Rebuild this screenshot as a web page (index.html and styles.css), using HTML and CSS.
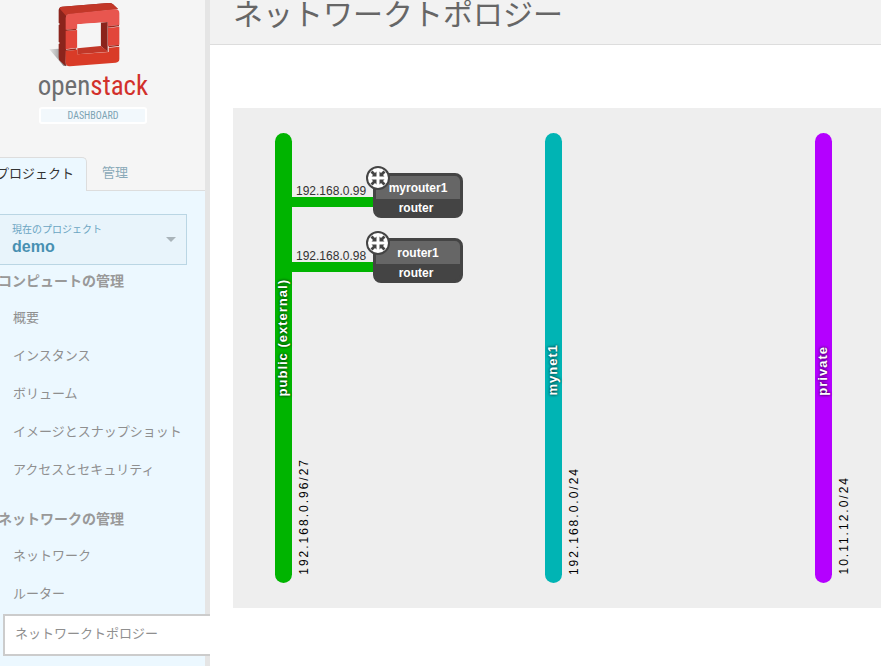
FILE: index.html
```html
<!DOCTYPE html>
<html lang="ja">
<head>
<meta charset="utf-8">
<title>ネットワークトポロジー</title>
<link rel="stylesheet" href="styles.css">
</head>
<body>
<div class="page">
  <aside class="sidebar">
    <a class="brand" href="#">
      <svg class="brand-mark" viewBox="144 6 216 198" aria-hidden="true">
        <defs>
          <linearGradient id="shade" x1="0" x2="1">
            <stop offset="0" stop-color="#999" stop-opacity=".2"/>
            <stop offset="1" stop-color="#666"/>
          </linearGradient>
        </defs>
        <path d="M148 148L178 146L200 198L190 197Z" fill="url(#shade)"/>
        <path d="M176 30Q177 21 186 20L325 9Q333 8 339 13L354 27L200 44L197 199L181 184Q176 181 176 172V132L180 129L176 126V75L180 72L176 69Z" fill="#8b241c"/>
        <path d="M178 25Q180 21 187 20L325 9Q333 8 339 13L354 27L207 42Q202 43 198 47Z" fill="#c23728"/>
        <path d="M197 55Q197 43 210 41L344 28Q358 27 358 40V75L323 79V66L232 73V86L197 89Z" fill="#e8564f"/>
        <path d="M197 93L232 90V143L197 148Z" fill="#e2463a"/>
        <path d="M324 84L358 80V134L324 138Z" fill="#e2463a"/>
        <path d="M302 68L323 66V155L302 138Z" fill="#8b241c"/>
        <path d="M232 73L302 68V138L232 143Z" fill="#f5f5f5"/>
        <path d="M232 145L302 138L325 155L232 163Z" fill="#c23728"/>
        <path d="M197 153L232 149V163L326 156V143L358 140V177Q358 187 347 188L210 199Q197 200 197 187Z" fill="#d93b27"/>
        <path d="M197 91L229 88M324 81L357 77M197 151L229 147M326 140L357 136" stroke="#9d2a20" stroke-width="4"/>
      </svg>
      <span class="brand-name">open<b>stack</b></span>
      <span class="brand-sub">DASHBOARD</span>
    </a>
    <nav class="tabs">
      <a class="tab tab-active" href="#">プロジェクト</a>
      <a class="tab" href="#">管理</a>
    </nav>
    <div class="panel">
      <button class="switcher" type="button">
        <span class="switcher-text">
          <span class="switcher-label">現在のプロジェクト</span>
          <span class="switcher-value">demo</span>
        </span>
        <span class="caret"></span>
      </button>
      <h2 class="group">コンピュートの管理</h2>
      <ul class="menu">
        <li><a href="#">概要</a></li>
        <li><a href="#">インスタンス</a></li>
        <li><a href="#">ボリューム</a></li>
        <li><a href="#">イメージとスナップショット</a></li>
        <li><a href="#">アクセスとセキュリティ</a></li>
      </ul>
      <h2 class="group">ネットワークの管理</h2>
      <ul class="menu">
        <li><a href="#">ネットワーク</a></li>
        <li><a href="#">ルーター</a></li>
        <li><a class="current" href="#">ネットワークトポロジー</a></li>
      </ul>
    </div>
  </aside>
  <main class="main">
    <header class="header"><h1>ネットワークトポロジー</h1></header>
    <section class="topology">
      <div class="network">
        <div class="bar bar-green"><span class="net-name">public (external)</span></div>
        <div class="side">
          <div class="devices">
            <div class="device">
              <div class="port"><span>192.168.0.99</span></div>
              <a class="router" href="#">
                <svg class="router-icon" viewBox="0 0 24 24" aria-hidden="true">
                  <circle cx="12" cy="12" r="11" fill="#fff" stroke="#444" stroke-width="2"/>
                  <g id="arrows" fill="#444">
                    <path id="arrow" d="M4.500 6.500L6.500 4.500L9 7L10.500 5.500V10.500H5.500L7 9Z"/>
                    <use href="#arrow" transform="rotate(90 12 12)"/>
                    <use href="#arrow" transform="rotate(180 12 12)"/>
                    <use href="#arrow" transform="rotate(270 12 12)"/>
                  </g>
                </svg>
                <span class="router-name">myrouter1</span>
                <span class="router-type">router</span>
              </a>
            </div>
            <div class="device">
              <div class="port"><span>192.168.0.98</span></div>
              <a class="router" href="#">
                <svg class="router-icon" viewBox="0 0 24 24" aria-hidden="true">
                  <circle cx="12" cy="12" r="11" fill="#fff" stroke="#444" stroke-width="2"/>
                  <use href="#arrows"/>
                </svg>
                <span class="router-name">router1</span>
                <span class="router-type">router</span>
              </a>
            </div>
          </div>
          <span class="cidr">192.168.0.96/27</span>
        </div>
      </div>
      <div class="network">
        <div class="bar bar-teal"><span class="net-name">mynet1</span></div>
        <div class="side"><span class="cidr">192.168.0.0/24</span></div>
      </div>
      <div class="network">
        <div class="bar bar-purple"><span class="net-name">private</span></div>
        <div class="side"><span class="cidr">10.11.12.0/24</span></div>
      </div>
    </section>
  </main>
</div>
</body>
</html>
```
FILE: styles.css
```css
* { box-sizing: border-box; }
html, body { height: 100%; }
body {
  margin: 0;
  overflow: hidden;
  background: #fff;
  color: #666;
  font: 13px/20px "Liberation Sans", "Noto Sans CJK JP", sans-serif;
}
a { color: inherit; text-decoration: none; }
h1, h2, ul { margin: 0; padding: 0; }
ul { list-style: none; }

.page { display: flex; min-height: 100%; }

/* The sidebar starts a little beyond the left edge of the window. */
.sidebar {
  flex: none;
  display: flex;
  flex-direction: column;
  width: 230px;
  margin-left: -20px;
  border-right: 5px solid #e5e5e5;
  background: #f5f5f5;
}
.brand {
  display: flex;
  flex-direction: column;
  align-items: center;
  width: 108px;
  margin-left: 59px;
  padding-top: 2px;
}
.brand-mark { width: 72px; height: 66px; margin-right: 18px; }
.brand-name {
  font: 27px/36px "Roboto Condensed", "Open Sans Condensed", "Liberation Sans Narrow", sans-serif;
  color: #6d6e70;
}
.brand-name b { color: #d2302b; font-weight: inherit; }
.brand-sub {
  width: 108px;
  margin-top: 3px;
  border: 2px solid #fff;
  border-radius: 3px;
  background: #f2f8fc;
  color: #7da3b3;
  font: 10px/13px "Roboto Condensed", "Open Sans Condensed", "Liberation Sans Narrow", sans-serif;
  text-align: center;
}

.tabs {
  display: flex;
  margin-top: 33px;
  border-bottom: 1px solid #ddd;
}
.tab {
  padding: 6px 15px 7px;
  color: #8aa9b8;
  white-space: nowrap;
}
.tab-active {
  width: 107px;
  margin-bottom: -1px;
  border: 1px solid #ddd;
  border-bottom: 0;
  border-radius: 0 5px 0 0;
  background: #ecf8ff;
  color: #333;
}

.panel {
  flex: 1;
  padding: 23px 0 10px 18px;
  background: #ecf8ff;
}
.switcher {
  display: flex;
  align-items: center;
  justify-content: space-between;
  width: 189px;
  height: 51px;
  margin-bottom: 6px;
  padding: 0 10px 0 13px;
  border: 1px solid #bad6e4;
  background: #e8f4fb;
  font: inherit;
  text-align: left;
}
.switcher-text { display: flex; flex-direction: column; }
.switcher-label { color: #6ba5c2; font-size: 10px; line-height: 14px; }
.switcher-value { color: #4790b2; font-size: 16px; font-weight: bold; line-height: 20px; }
.caret {
  border: 5px solid transparent;
  border-top-color: #a9b4ba;
  border-bottom: 0;
}
.group {
  margin-bottom: 8px;
  color: #999;
  font-size: 14px;
  line-height: 20px;
}
.menu a {
  display: block;
  padding: 9px 15px;
  color: #8f8f8f;
}
.menu + .group { margin-top: 20px; }
.menu .current {
  margin: 1px -5px 0 5px;
  padding: 8px 10px 10px;
  border: 2px solid #ccc;
  border-right: 0;
  background: #fff;
}

.main { flex: 1; min-width: 0; }
.header {
  padding: 0 23px 14px;
  border-bottom: 1px solid #ddd;
  background: #f2f2f2;
}
.header h1 { font-size: 30px; font-weight: normal; line-height: 30px; }

.topology {
  display: flex;
  margin: 63px 0 0 23px;
  padding: 25px 0 25px 42px;
  overflow: hidden;
  background: #eee;
}
.network { flex: none; display: flex; width: 270px; height: 450px; }
.bar {
  display: flex;
  align-items: flex-end;
  width: 17px;
  padding-bottom: 187px;
  border-radius: 9px;
}
.bar-green { background: #00b400; }
.bar-teal { background: #00b4b4; }
.bar-purple { background: #b400ff; }
.net-name, .cidr {
  writing-mode: vertical-rl;
  transform: rotate(180deg);
  white-space: nowrap;
  font-size: 12px;
  line-height: 17px;
}
.net-name {
  color: #fff;
  font-size: 13px;
  font-weight: bold;
  line-height: 15px;
  letter-spacing: 1px;
  text-shadow: 0 0 3px #000;
}
.cidr { margin: auto 0 8px 4px; color: #000; letter-spacing: 2px; }
.side { display: flex; flex-direction: column; align-items: flex-start; }
.devices { display: flex; flex-direction: column; gap: 20px; padding-top: 40px; }
.device { display: flex; }
.port {
  width: 81px;
  height: 34px;
  padding: 11px 0 0 4px;
  border-bottom: 10px solid #00b400;
  color: #333;
  font-size: 12px;
  line-height: 14px;
}
.router {
  position: relative;
  display: flex;
  flex-direction: column;
  width: 90px;
  height: 45px;
  border: 3px solid #444;
  border-radius: 8px;
  background: #444;
  color: #fff;
  font-size: 12px;
  font-weight: bold;
  text-align: center;
}
.router-name { padding-top: 2px; border-radius: 5px 5px 0 0; background: #666; line-height: 21px; }
.router-type { padding-right: 4px; line-height: 18px; }
.router-icon { position: absolute; top: -10px; left: -10px; width: 24px; height: 24px; }
```
